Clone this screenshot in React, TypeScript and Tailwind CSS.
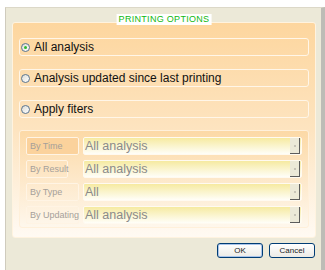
import React from 'react'

const font = { fontFamily: '"Liberation Sans", Arial, sans-serif' }

function RadioRow({ label, checked }: { label: string; checked?: boolean }) {
  return (
    <div className="flex h-[18px] items-center gap-[4px] rounded-[3px] border border-[#fff6e8] pl-[1px]">
      <div className="flex h-[9px] w-[9px] items-center justify-center rounded-full border border-[#5a7590] bg-gradient-to-br from-[#dcdcd6] to-white">
        {checked && <div className="h-[3px] w-[3px] rounded-full bg-[#2fb82f]" />}
      </div>
      <span className="text-[12px] leading-none text-[#111]">{label}</span>
    </div>
  )
}

function FilterRow({
  label,
  value,
  active,
  labelWidth = 'w-[53px]',
}: {
  label: string
  value: string
  active?: boolean
  labelWidth?: string
}) {
  return (
    <div className="flex h-[18px] items-stretch">
      <div className="w-[57px] shrink-0">
        <div
          className={`flex h-full items-center whitespace-nowrap rounded-[2px] border border-[#fff4e4] px-[3px] text-[9px] leading-none text-[#a5a09a] ${labelWidth} ${
            active ? 'bg-[#fbd29c]' : ''
          }`}
        >
          {label}
        </div>
      </div>
      <div className="flex flex-1 items-center rounded-[2px] border border-[#fffaf0] bg-gradient-to-b from-[#f6eaa0] to-[#fffef8] pl-[1px] pr-[1px]">
        <span className="flex-1 text-[12.5px] leading-none text-[#8a8a8a]">{value}</span>
        <div className="flex h-[16px] w-[10px] items-center justify-center border-r border-b border-r-[#5c5c5c] border-b-[#5c5c5c] bg-[#ece9d8]">
          <div className="h-[2px] w-[2px] bg-[#c8c4b8]" />
        </div>
      </div>
    </div>
  )
}

export default function App() {
  return (
    <div className="h-[270px] w-[325px] overflow-hidden bg-white" style={font}>
      <div className="ml-[5px] mt-[7px] flex h-[263px] w-[320px] flex-col border-l border-t border-l-[#cfcbbd] border-t-[#dcd8c8] border-r-[4px] border-r-[#bdbcb6] bg-[#ece9d8] pl-[6px] pr-[5px] pt-[14px]">
        <div className="relative flex h-[216px] w-[304px] flex-col gap-[13px] rounded-[3px] border border-[#fff3df] bg-gradient-to-b from-[#fdd69e] via-[#fde4c0] to-[#fffaf3] px-[6px] pt-[15px]">
          <div className="absolute left-1/2 top-[-9px] -translate-x-1/2 bg-white px-[2px] text-[9px] leading-[11px] tracking-[0.3px] text-[#10b810]">
            PRINTING OPTIONS
          </div>
          <RadioRow label="All analysis" checked />
          <RadioRow label="Analysis updated since last printing" />
          <RadioRow label="Apply fiters" />
          <div className="mt-[-1px] flex h-[98px] flex-col gap-[5px] rounded-[3px] border border-[#fff0da] bg-gradient-to-b from-[#fcd9a6] to-[#fef7ec] px-[6px] pt-[6px]">
            <FilterRow label="By Time" value="All analysis" active />
            <FilterRow label="By Result" value="All analysis" labelWidth="w-[42px]" />
            <FilterRow label="By Type" value="All" />
            <FilterRow label="By Updating" value="All analysis" />
          </div>
        </div>
        <div className="mt-[5px] flex justify-end gap-[6px] pr-[1px]">
          <button className="flex h-[15px] w-[46px] items-center justify-center rounded-[3px] border border-[#003c74] bg-gradient-to-b from-white to-[#ecebe6] text-[8px] leading-none text-[#222] shadow-[inset_0_0_0_1px_#a9c4ea]">
            OK
          </button>
          <button className="flex h-[15px] w-[46px] items-center justify-center rounded-[3px] border border-[#003c74] bg-gradient-to-b from-white to-[#ecebe6] text-[8px] leading-none text-[#222]">
            Cancel
          </button>
        </div>
      </div>
    </div>
  )
}
